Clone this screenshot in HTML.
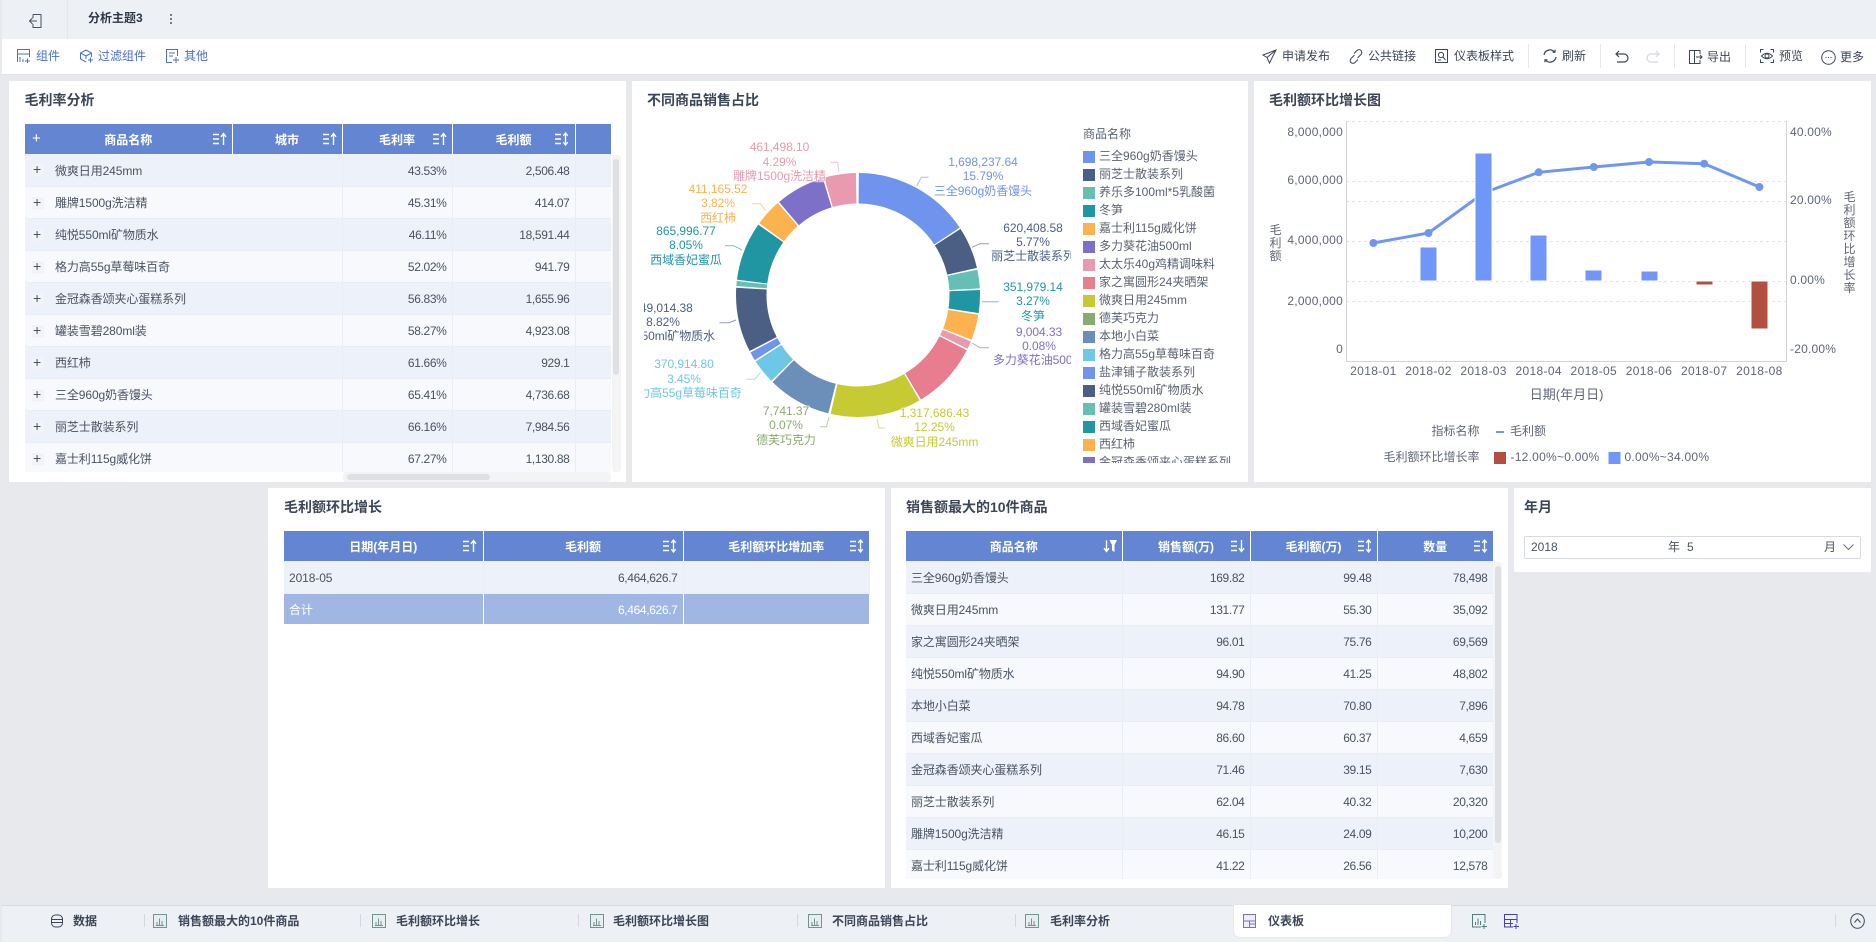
<!DOCTYPE html>
<html lang="zh-CN"><head><meta charset="utf-8"><title>分析主题3</title>
<style>
html,body{margin:0;padding:0}
body{width:1876px;height:942px;position:relative;overflow:hidden;background:#e8e9ed;font:12px/16px "Liberation Sans","Noto Sans CJK SC",sans-serif;color:#4a5262}
.a{position:absolute}
.t{position:absolute;white-space:nowrap;line-height:16px}
.top{left:2px;top:0;width:1874px;height:39px;background:#edf0f5}
.bar{left:2px;top:39px;width:1874px;height:35px;background:#fff;border-bottom:1px solid #e0e2e8;box-sizing:content-box}
.blue{color:#4a6fd1}
.dk{color:#3d4656}
.panel{position:absolute;background:#fff}
.title{position:absolute;font-size:14px;font-weight:bold;line-height:18px;color:#3d4656;white-space:nowrap}
.sep{position:absolute;width:1px;background:#e4e6ec}
table{border-collapse:collapse;table-layout:fixed;font-size:12px;color:#4a5262}
th{height:30px;padding:1px 0 0;background:#6486d2;color:#fff;font-weight:bold;border-right:1px solid #fff;position:relative;text-align:center;box-sizing:border-box}
th:last-child{border-right:0}
td{height:32px;padding:2px 5px 0;box-sizing:border-box;border-right:1px solid #e8edf6;border-bottom:1px solid #e8edf6;white-space:nowrap;letter-spacing:-.1px}
td.r{text-align:right;letter-spacing:-.35px}
tr.o td{background:#edf2fa}
tr.e td{background:#f7f9fd}
th svg{position:absolute;top:8px;width:14px;height:14px}
.pl{position:absolute;left:7px;top:10px;width:12px;height:12px;background:#f1f3f7}
td.n{position:relative;padding-left:30px}
.st{position:absolute;top:905px;height:37px}
.tab{position:absolute;top:913px;font-weight:bold;color:#3d4656;white-space:nowrap;line-height:16px}
svg text{font-family:"Liberation Sans","Noto Sans CJK SC",sans-serif}
</style></head>
<body>
<svg width="0" height="0" style="position:absolute">
<defs>
<symbol id="su" viewBox="0 0 14 14"><path d="M0 2.5H6M0 7H6M0 11.5H6" stroke="#fff" stroke-width="1.4" fill="none"/><path d="M10.5 13V1.5M8 4.8 10.5 1.5 13 4.8" stroke="#fff" stroke-width="1.4" fill="none"/></symbol>
<symbol id="sb" viewBox="0 0 14 14"><path d="M0 2.5H6M0 7H6M0 11.5H6" stroke="#fff" stroke-width="1.4" fill="none"/><path d="M10.5 1V13M8.3 3.8 10.5 1 12.7 3.8M8.3 10.2 10.5 13 12.7 10.2" stroke="#fff" stroke-width="1.3" fill="none"/></symbol>
<symbol id="sd" viewBox="0 0 14 14"><path d="M0 2.5H6M0 7H6M0 11.5H6" stroke="#fff" stroke-width="1.4" fill="none"/><path d="M10.5 1V12.5M8 9.2 10.5 12.5 13 9.2" stroke="#fff" stroke-width="1.4" fill="none"/></symbol>
<symbol id="sf" viewBox="0 0 14 14"><path d="M3.5 1.5V12.5M1 9.2 3.5 12.5 6 9.2" stroke="#fff" stroke-width="1.4" fill="none"/><path d="M6.5 1H14L11.5 6V13L9 11.5V6Z" fill="#fff"/></symbol>
<symbol id="ch" viewBox="0 0 14 14"><rect x=".5" y=".5" width="13" height="13" fill="#e6eef0" stroke="#6f968f"/><path d="M4 11V8M6.5 11V4.5M9 11V7M3 11.5H11" stroke="#6f968f" fill="none"/></symbol>
</defs>
</svg>

<div class="a top"></div>
<div class="sep" style="left:67px;top:0;height:39px;background:#e4e7ee"></div>
<svg class="a" style="left:28px;top:13px" width="15" height="16" viewBox="0 0 15 16" fill="none" stroke="#4a5262"><path d="M5 1.5H13V14.5H5V11M5 5V1.5"/><path d="M9 8H1.5M4.5 5 1.5 8 4.5 11"/></svg>
<div class="t" style="left:88px;top:10px;font-weight:bold;color:#2f3644">分析主题3</div>
<svg class="a" style="left:169px;top:12px" width="4" height="14"><circle cx="2" cy="3" r="1" fill="#555"/><circle cx="2" cy="7" r="1" fill="#555"/><circle cx="2" cy="11" r="1" fill="#555"/></svg>

<div class="a bar"></div>
<svg class="a" style="left:17px;top:49px" width="13" height="14" viewBox="0 0 13 14" fill="none" stroke="#4a6fd1"><path d="M.5 13V.5H12.5V8M.5 5H12.5M3 13V8M6 13V10M8 12H13M10.5 9.5V14"/></svg>
<div class="t blue" style="left:36px;top:48px">组件</div>
<svg class="a" style="left:79px;top:49px" width="14" height="14" viewBox="0 0 14 14" fill="none" stroke="#4a6fd1"><path d="M7 1 12.5 4V8M7 1 1.5 4V10L7 13M1.5 4 7 7 12.5 4M7 7V10M9 11H14M11.5 8.5V13.5"/></svg>
<div class="t blue" style="left:98px;top:48px">过滤组件</div>
<svg class="a" style="left:166px;top:49px" width="13" height="14" viewBox="0 0 13 14" fill="none" stroke="#4a6fd1"><path d="M.5 13.5V.5H11.5V7M3 4H9M3 7H7M.5 13.5H6M7 11H13M10 8V14"/></svg>
<div class="t blue" style="left:184px;top:48px">其他</div>

<svg class="a" style="left:1262px;top:49px" width="15" height="15" viewBox="0 0 15 15" fill="none" stroke="#3d4656"><path d="M14 1 1 6 5 8.5 7.5 14ZM14 1 5 8.5"/></svg>
<div class="t dk" style="left:1282px;top:48px">申请发布</div>
<svg class="a" style="left:1349px;top:49px" width="14" height="15" viewBox="0 0 14 15" fill="none" stroke="#3d4656"><path d="M5.5 6 2 9.5A2.8 2.8 0 0 0 6 13.5L9 10.5M8.5 9 12 5.5A2.8 2.8 0 0 0 8 1.5L5 4.5"/></svg>
<div class="t dk" style="left:1368px;top:48px">公共链接</div>
<svg class="a" style="left:1435px;top:49px" width="13" height="14" viewBox="0 0 13 14" fill="none" stroke="#3d4656"><path d="M.5.5H12.5V13.5H.5Z"/><circle cx="6" cy="6" r="2.6"/><path d="M8 8 10.5 11M3 11H6"/></svg>
<div class="t dk" style="left:1454px;top:48px">仪表板样式</div>
<div class="sep" style="left:1528px;top:44px;height:24px"></div>
<svg class="a" style="left:1543px;top:49px" width="14" height="14" viewBox="0 0 14 14" fill="none" stroke="#3d4656" stroke-width="1.2"><path d="M1 6A6 6 0 0 1 11.5 3M13 8A6 6 0 0 1 2.5 11M9.5 3.2H12V.8M4.5 10.8H2V13.2"/></svg>
<div class="t dk" style="left:1562px;top:48px">刷新</div>
<div class="sep" style="left:1600px;top:44px;height:24px"></div>
<svg class="a" style="left:1615px;top:50px" width="14" height="13" viewBox="0 0 14 13" fill="none" stroke="#3d4656" stroke-width="1.2"><path d="M4 1 1 4 4 7M1 4H9A3.5 3.5 0 0 1 9 12H2"/></svg>
<svg class="a" style="left:1646px;top:50px" width="14" height="13" viewBox="0 0 14 13" fill="none" stroke="#d5d8de" stroke-width="1.2"><path d="M10 1 13 4 10 7M13 4H5A3.5 3.5 0 0 0 5 12H12"/></svg>
<div class="sep" style="left:1674px;top:44px;height:24px"></div>
<svg class="a" style="left:1689px;top:50px" width="14" height="14" viewBox="0 0 14 14" fill="none" stroke="#3d4656"><path d="M.5.5H5.5V13.5H.5ZM5.5.5H11V4M5.5 13.5H11V10M7 7H13M11 5 13 7 11 9"/></svg>
<div class="t dk" style="left:1707px;top:49px">导出</div>
<div class="sep" style="left:1745px;top:44px;height:24px"></div>
<svg class="a" style="left:1760px;top:49px" width="14" height="14" viewBox="0 0 14 14" fill="none" stroke="#3d4656"><path d="M.5 3.5V.5H3.5M10.5.5H13.5V3.5M13.5 10.5V13.5H10.5M3.5 13.5H.5V10.5M1.5 7Q7 1.5 12.5 7 7 12.5 1.5 7Z"/><circle cx="7" cy="7" r="2"/></svg>
<div class="t dk" style="left:1779px;top:48px">预览</div>
<svg class="a" style="left:1821px;top:50px" width="15" height="15" viewBox="0 0 15 15" fill="none" stroke="#3d4656"><circle cx="7.5" cy="7.5" r="6.8"/><path d="M4.5 7.5h1M7 7.5h1M9.5 7.5h1"/></svg>
<div class="t dk" style="left:1840px;top:49px">更多</div>

<!-- Panel 1 -->
<div class="panel" style="left:9px;top:81px;width:617px;height:401px"></div>
<div class="title" style="left:24.5px;top:91px">毛利率分析</div>
<div class="a" style="left:25px;top:124px;width:586px;height:348px;overflow:hidden">
<table style="width:586px">
<colgroup><col style="width:207px"><col style="width:110px"><col style="width:110px"><col style="width:123px"><col style="width:36px"></colgroup>
<tr><th><span class="a" style="left:7px;top:7px;font-size:15px;font-weight:normal">+</span>商品名称<svg style="right:5px"><use href="#su"/></svg></th><th>城市<svg style="right:5px"><use href="#su"/></svg></th><th>毛利率<svg style="right:5px"><use href="#su"/></svg></th><th>毛利额<svg style="right:6px"><use href="#sb"/></svg></th><th></th></tr>
<tr class="o"><td class="n" colspan="2"><span class="pl"></span><span class="a" style="left:8px;top:7px;font-size:14px">+</span>微爽日用245mm</td><td class="r">43.53%</td><td class="r">2,506.48</td><td></td></tr>
<tr class="e"><td class="n" colspan="2"><span class="pl"></span><span class="a" style="left:8px;top:7px;font-size:14px">+</span>雕牌1500g洗洁精</td><td class="r">45.31%</td><td class="r">414.07</td><td></td></tr>
<tr class="o"><td class="n" colspan="2"><span class="pl"></span><span class="a" style="left:8px;top:7px;font-size:14px">+</span>纯悦550ml矿物质水</td><td class="r">46.11%</td><td class="r">18,591.44</td><td></td></tr>
<tr class="e"><td class="n" colspan="2"><span class="pl"></span><span class="a" style="left:8px;top:7px;font-size:14px">+</span>格力高55g草莓味百奇</td><td class="r">52.02%</td><td class="r">941.79</td><td></td></tr>
<tr class="o"><td class="n" colspan="2"><span class="pl"></span><span class="a" style="left:8px;top:7px;font-size:14px">+</span>金冠森香颂夹心蛋糕系列</td><td class="r">56.83%</td><td class="r">1,655.96</td><td></td></tr>
<tr class="e"><td class="n" colspan="2"><span class="pl"></span><span class="a" style="left:8px;top:7px;font-size:14px">+</span>罐装雪碧280ml装</td><td class="r">58.27%</td><td class="r">4,923.08</td><td></td></tr>
<tr class="o"><td class="n" colspan="2"><span class="pl"></span><span class="a" style="left:8px;top:7px;font-size:14px">+</span>西红柿</td><td class="r">61.66%</td><td class="r">929.1</td><td></td></tr>
<tr class="e"><td class="n" colspan="2"><span class="pl"></span><span class="a" style="left:8px;top:7px;font-size:14px">+</span>三全960g奶香馒头</td><td class="r">65.41%</td><td class="r">4,736.68</td><td></td></tr>
<tr class="o"><td class="n" colspan="2"><span class="pl"></span><span class="a" style="left:8px;top:7px;font-size:14px">+</span>丽芝士散装系列</td><td class="r">66.16%</td><td class="r">7,984.56</td><td></td></tr>
<tr class="e"><td class="n" colspan="2"><span class="pl"></span><span class="a" style="left:8px;top:7px;font-size:14px">+</span>嘉士利115g威化饼</td><td class="r">67.27%</td><td class="r">1,130.88</td><td></td></tr>
</table></div>
<div class="a" style="left:612px;top:155px;width:9px;height:317px;background:#f4f4f5;border-radius:3px"></div>
<div class="a" style="left:613px;top:159px;width:6px;height:216px;background:#dfe0e4;border-radius:3px"></div>
<div class="a" style="left:343px;top:472px;width:268px;height:10px;background:#f4f4f5;border-radius:3px"></div>
<div class="a" style="left:347px;top:474px;width:143px;height:6px;background:#dfe0e4;border-radius:3px"></div>

<!-- Panel 2 -->
<div class="panel" style="left:632px;top:81px;width:616px;height:401px"></div>
<div class="title" style="left:647px;top:91px">不同商品销售占比</div>
<svg class="a" style="left:0;top:0" width="1876" height="942" font-size="12">
<defs><clipPath id="pc"><rect x="644" y="120" width="427" height="340"/></clipPath><clipPath id="lc"><rect x="1080" y="120" width="165" height="343"/></clipPath></defs>
<g fill="none" stroke-width="30.5" transform="rotate(-90 858 295)">
<circle cx="858" cy="295" r="106.75" pathLength="360" stroke="#6f94ee" stroke-dasharray="56.1 360" stroke-dashoffset="-.4"/>
<circle cx="858" cy="295" r="106.75" pathLength="360" stroke="#4b5f85" stroke-dasharray="20 360" stroke-dashoffset="-57.2"/>
<circle cx="858" cy="295" r="106.75" pathLength="360" stroke="#65bfb5" stroke-dasharray="8.9 360" stroke-dashoffset="-78"/>
<circle cx="858" cy="295" r="106.75" pathLength="360" stroke="#2196a3" stroke-dasharray="10.9 360" stroke-dashoffset="-87.7"/>
<circle cx="858" cy="295" r="106.75" pathLength="360" stroke="#fbb24f" stroke-dasharray="12.2 360" stroke-dashoffset="-99.4"/>
<circle cx="858" cy="295" r="106.75" pathLength="360" stroke="#e99aae" stroke-dasharray="3.8 360" stroke-dashoffset="-112.4"/>
<circle cx="858" cy="295" r="106.75" pathLength="360" stroke="#e77d8e" stroke-dasharray="32 360" stroke-dashoffset="-117"/>
<circle cx="858" cy="295" r="106.75" pathLength="360" stroke="#c6cb33" stroke-dasharray="43.3 360" stroke-dashoffset="-149.8"/>
<circle cx="858" cy="295" r="106.75" pathLength="360" stroke="#6b8fb8" stroke-dasharray="30.4 360" stroke-dashoffset="-194.2"/>
<circle cx="858" cy="295" r="106.75" pathLength="360" stroke="#6ec7e6" stroke-dasharray="11.7 360" stroke-dashoffset="-225.4"/>
<circle cx="858" cy="295" r="106.75" pathLength="360" stroke="#6f94ee" stroke-dasharray="4.1 360" stroke-dashoffset="-237.9"/>
<circle cx="858" cy="295" r="106.75" pathLength="360" stroke="#4b5f85" stroke-dasharray="30.8 360" stroke-dashoffset="-242.8"/>
<circle cx="858" cy="295" r="106.75" pathLength="360" stroke="#65bfb5" stroke-dasharray="2.4 360" stroke-dashoffset="-274.4"/>
<circle cx="858" cy="295" r="106.75" pathLength="360" stroke="#2196a3" stroke-dasharray="28 360" stroke-dashoffset="-277.4"/>
<circle cx="858" cy="295" r="106.75" pathLength="360" stroke="#fbb24f" stroke-dasharray="12.9 360" stroke-dashoffset="-306.2"/>
<circle cx="858" cy="295" r="106.75" pathLength="360" stroke="#7d70c8" stroke-dasharray="23.5 360" stroke-dashoffset="-319.9"/>
<circle cx="858" cy="295" r="106.75" pathLength="360" stroke="#e99aae" stroke-dasharray="15 360" stroke-dashoffset="-344.2"/>
</g>
<g fill="none" stroke-width="1" opacity=".6">
<path d="M916.7 186 921.4 177.3H928.5" stroke="#6f94ee"/>
<path d="M972 247.3 980 243.7H989" stroke="#4b5f85"/>
<path d="M982 301.7H998.5" stroke="#2196a3"/>
<path d="M972 343 980 347.7H989" stroke="#7d70c8"/>
<path d="M877 419 879 428H885" stroke="#c6cb33"/>
<path d="M829 417 826.5 426.7H820" stroke="#8aab6f"/>
<path d="M760.5 373 754.5 379.3H746.6" stroke="#6ec7e6"/>
<path d="M736 320 729 322.7H719.4" stroke="#4b5f85"/>
<path d="M742 250 733.6 245.7H725" stroke="#2196a3"/>
<path d="M765.6 210.7 760.5 203.7H751.8" stroke="#fbb24f"/>
<path d="M838.8 171.7 837.6 162.3H830.5" stroke="#e99aae"/>
</g>
<g clip-path="url(#pc)" text-anchor="middle" stroke="#fff" stroke-width="2" stroke-opacity=".7" paint-order="stroke" letter-spacing="-.05">
<g fill="#6f94ee"><text x="983" y="166">1,698,237.64</text><text x="983" y="180">15.79%</text><text x="983" y="195">三全960g奶香馒头</text></g>
<g fill="#4b5f85"><text x="1033" y="232">620,408.58</text><text x="1033" y="246">5.77%</text><text x="1033" y="260">丽芝士散装系列</text></g>
<g fill="#2196a3"><text x="1033" y="291">351,979.14</text><text x="1033" y="305">3.27%</text><text x="1033" y="320">冬笋</text></g>
<g fill="#7d70c8"><text x="1039" y="336">9,004.33</text><text x="1039" y="350">0.08%</text><text x="1039" y="364">多力葵花油500ml</text></g>
<g fill="#c6cb33"><text x="934.5" y="417">1,317,686.43</text><text x="934.5" y="431">12.25%</text><text x="934.5" y="446">微爽日用245mm</text></g>
<g fill="#8aab6f"><text x="786" y="415">7,741.37</text><text x="786" y="429">0.07%</text><text x="786" y="444">德芙巧克力</text></g>
<g fill="#6ec7e6"><text x="684" y="368">370,914.80</text><text x="684" y="383">3.45%</text><text x="684" y="397">格力高55g草莓味百奇</text></g>
<g fill="#4b5f85"><text x="663" y="312">949,014.38</text><text x="663" y="326">8.82%</text><text x="663" y="340">纯悦550ml矿物质水</text></g>
<g fill="#2196a3"><text x="686" y="235">865,996.77</text><text x="686" y="249">8.05%</text><text x="686" y="264">西域香妃蜜瓜</text></g>
<g fill="#fbb24f"><text x="718" y="193">411,165.52</text><text x="718" y="207">3.82%</text><text x="718" y="222">西红柿</text></g>
<g fill="#e99aae"><text x="779.5" y="151">461,498.10</text><text x="779.5" y="166">4.29%</text><text x="779.5" y="180">雕牌1500g洗洁精</text></g>
</g>
<text x="1083" y="138" fill="#5a6272">商品名称</text>
<g clip-path="url(#lc)" fill="#5a6272">
<rect x="1083" y="151" width="12" height="12" fill="#6f94ee"/><text x="1099" y="160">三全960g奶香馒头</text>
<rect x="1083" y="169" width="12" height="12" fill="#4b5f85"/><text x="1099" y="178">丽芝士散装系列</text>
<rect x="1083" y="187" width="12" height="12" fill="#65bfb5"/><text x="1099" y="196">养乐多100ml*5乳酸菌</text>
<rect x="1083" y="205" width="12" height="12" fill="#2196a3"/><text x="1099" y="214">冬笋</text>
<rect x="1083" y="223" width="12" height="12" fill="#fbb24f"/><text x="1099" y="232">嘉士利115g威化饼</text>
<rect x="1083" y="241" width="12" height="12" fill="#7d70c8"/><text x="1099" y="250">多力葵花油500ml</text>
<rect x="1083" y="259" width="12" height="12" fill="#e99aae"/><text x="1099" y="268">太太乐40g鸡精调味料</text>
<rect x="1083" y="277" width="12" height="12" fill="#e77d8e"/><text x="1099" y="286">家之寓圆形24夹晒架</text>
<rect x="1083" y="295" width="12" height="12" fill="#c6cb33"/><text x="1099" y="304">微爽日用245mm</text>
<rect x="1083" y="313" width="12" height="12" fill="#8aab6f"/><text x="1099" y="322">德芙巧克力</text>
<rect x="1083" y="331" width="12" height="12" fill="#6b8fb8"/><text x="1099" y="340">本地小白菜</text>
<rect x="1083" y="349" width="12" height="12" fill="#6ec7e6"/><text x="1099" y="358">格力高55g草莓味百奇</text>
<rect x="1083" y="367" width="12" height="12" fill="#6f94ee"/><text x="1099" y="376">盐津铺子散装系列</text>
<rect x="1083" y="385" width="12" height="12" fill="#4b5f85"/><text x="1099" y="394">纯悦550ml矿物质水</text>
<rect x="1083" y="403" width="12" height="12" fill="#65bfb5"/><text x="1099" y="412">罐装雪碧280ml装</text>
<rect x="1083" y="421" width="12" height="12" fill="#2196a3"/><text x="1099" y="430">西域香妃蜜瓜</text>
<rect x="1083" y="439" width="12" height="12" fill="#fbb24f"/><text x="1099" y="448">西红柿</text>
<rect x="1083" y="457" width="12" height="12" fill="#7d70c8"/><text x="1099" y="466">金冠森香颂夹心蛋糕系列</text>
</g>
</svg>

<!-- Panel 3 -->
<div class="panel" style="left:1254px;top:81px;width:617px;height:401px"></div>
<div class="title" style="left:1269px;top:91px">毛利额环比增长图</div>
<svg class="a" style="left:0;top:0" width="1876" height="942" font-size="12" fill="#5f6675">
<g stroke="#e4e4e4" stroke-dasharray="3 3"><path d="M1346 121.5H1786M1346 181.5H1786M1346 201.5H1786M1346 241.5H1786M1346 281.5H1786M1346 301.5H1786"/></g>
<path d="M1346.5 121V361.5H1786.5V121" fill="none" stroke="#d4d4d4"/>
<g text-anchor="end" letter-spacing=".25"><text x="1343" y="136">8,000,000</text><text x="1343" y="184">6,000,000</text><text x="1343" y="244">4,000,000</text><text x="1343" y="305">2,000,000</text><text x="1343" y="353">0</text></g>
<g letter-spacing=".2"><text x="1790" y="136">40.00%</text><text x="1790" y="204">20.00%</text><text x="1790" y="284">0.00%</text><text x="1790" y="353">-20.00%</text></g>
<g text-anchor="middle">
<text x="1275.5" y="234">毛</text><text x="1275.5" y="247">利</text><text x="1275.5" y="260">额</text>
<text x="1849.5" y="201">毛</text><text x="1849.5" y="214">利</text><text x="1849.5" y="227">额</text><text x="1849.5" y="240">环</text><text x="1849.5" y="253">比</text><text x="1849.5" y="266">增</text><text x="1849.5" y="279">长</text><text x="1849.5" y="292">率</text>
<g letter-spacing=".35"><text x="1373.4" y="375">2018-01</text><text x="1428.5" y="375">2018-02</text><text x="1483.6" y="375">2018-03</text><text x="1538.7" y="375">2018-04</text><text x="1593.8" y="375">2018-05</text><text x="1649" y="375">2018-06</text><text x="1704.2" y="375">2018-07</text><text x="1759.4" y="375">2018-08</text></g>
<text x="1566.6" y="399" font-size="13">日期(年月日)</text>
</g>
<path d="M1373.4 243 1428.5 233 1483.6 193 1538.7 172.3 1593.8 167 1649 162 1704.2 163.7 1759.4 187" fill="none" stroke="#7097f0" stroke-width="3"/>
<g fill="#7097f0"><circle cx="1373.4" cy="243" r="4"/><circle cx="1428.5" cy="233" r="4"/><circle cx="1538.7" cy="172.3" r="4"/><circle cx="1593.8" cy="167" r="4"/><circle cx="1649" cy="162" r="4"/><circle cx="1704.2" cy="163.7" r="4"/><circle cx="1759.4" cy="187" r="4"/></g>
<g fill="#7097f8" stroke="#fff"><rect x="1420" y="247" width="17" height="34"/><rect x="1475" y="153" width="17" height="128"/><rect x="1530" y="235" width="17" height="46"/><rect x="1585" y="270" width="17" height="11"/><rect x="1641" y="271" width="17" height="10"/></g>
<g fill="#b2503f" stroke="#fff"><rect x="1696" y="281" width="17" height="4"/><rect x="1751" y="281" width="17" height="48"/></g>
<g text-anchor="end"><text x="1479.5" y="435">指标名称</text><text x="1479.5" y="461">毛利额环比增长率</text></g>
<path d="M1496 432H1504" stroke="#7097f0" stroke-width="2"/>
<text x="1510" y="435">毛利额</text>
<rect x="1494" y="452" width="12" height="12" fill="#b2503f"/><text x="1510.5" y="461" letter-spacing=".25">-12.00%~0.00%</text>
<rect x="1608.5" y="452" width="12" height="12" fill="#7097f8"/><text x="1624.5" y="461" letter-spacing=".25">0.00%~34.00%</text>
</svg>

<!-- Bottom panels -->
<div class="panel" style="left:268px;top:488px;width:617px;height:400px"></div>
<div class="title" style="left:284px;top:498px">毛利额环比增长</div>
<div class="a" style="left:284px;top:531px">
<table style="width:585px">
<colgroup><col style="width:199px"><col style="width:200px"><col style="width:186px"></colgroup>
<tr><th>日期(年月日)<svg style="right:6px"><use href="#su"/></svg></th><th>毛利额<svg style="right:6px"><use href="#sb"/></svg></th><th>毛利额环比增加率<svg style="right:5px"><use href="#sb"/></svg></th></tr>
<tr class="o"><td>2018-05</td><td class="r">6,464,626.7</td><td></td></tr>
<tr><td style="background:#a0b6e3;color:#fff;border-right:1px solid #fff;border-bottom:0;height:31px">合计</td><td class="r" style="background:#a0b6e3;color:#fff;border-right:1px solid #fff;border-bottom:0;height:31px">6,464,626.7</td><td style="background:#a0b6e3;border:0;height:31px"></td></tr>
</table></div>

<div class="panel" style="left:891px;top:488px;width:617px;height:400px"></div>
<div class="title" style="left:906px;top:498px">销售额最大的10件商品</div>
<div class="a" style="left:906px;top:531px;width:587px;height:348px;overflow:hidden">
<table style="width:587px">
<colgroup><col style="width:216px"><col style="width:128px"><col style="width:127px"><col style="width:116px"></colgroup>
<tr><th>商品名称<svg style="right:5px"><use href="#sf"/></svg></th><th>销售额(万)<svg style="right:5px"><use href="#sd"/></svg></th><th>毛利额(万)<svg style="right:5px"><use href="#sb"/></svg></th><th>数量<svg style="right:5px"><use href="#sb"/></svg></th></tr>
<tr class="o"><td>三全960g奶香馒头</td><td class="r">169.82</td><td class="r">99.48</td><td class="r">78,498</td></tr>
<tr class="e"><td>微爽日用245mm</td><td class="r">131.77</td><td class="r">55.30</td><td class="r">35,092</td></tr>
<tr class="o"><td>家之寓圆形24夹晒架</td><td class="r">96.01</td><td class="r">75.76</td><td class="r">69,569</td></tr>
<tr class="e"><td>纯悦550ml矿物质水</td><td class="r">94.90</td><td class="r">41.25</td><td class="r">48,802</td></tr>
<tr class="o"><td>本地小白菜</td><td class="r">94.78</td><td class="r">70.80</td><td class="r">7,896</td></tr>
<tr class="e"><td>西域香妃蜜瓜</td><td class="r">86.60</td><td class="r">60.37</td><td class="r">4,659</td></tr>
<tr class="o"><td>金冠森香颂夹心蛋糕系列</td><td class="r">71.46</td><td class="r">39.15</td><td class="r">7,630</td></tr>
<tr class="e"><td>丽芝士散装系列</td><td class="r">62.04</td><td class="r">40.32</td><td class="r">20,320</td></tr>
<tr class="o"><td>雕牌1500g洗洁精</td><td class="r">46.15</td><td class="r">24.09</td><td class="r">10,200</td></tr>
<tr class="e"><td>嘉士利115g威化饼</td><td class="r">41.22</td><td class="r">26.56</td><td class="r">12,578</td></tr>
</table></div>
<div class="a" style="left:1493px;top:562px;width:9px;height:317px;background:#f4f4f5;border-radius:3px"></div>
<div class="a" style="left:1495px;top:566px;width:6px;height:277px;background:#dfe0e4;border-radius:3px"></div>

<div class="panel" style="left:1514px;top:488px;width:357px;height:84px"></div>
<div class="title" style="left:1524px;top:498px">年月</div>
<div class="a" style="left:1524px;top:536px;width:337px;height:23px;box-sizing:border-box;border:1px solid #d8dae2;border-radius:2px"></div>
<div class="t" style="left:1531px;top:539px;color:#4a5262">2018</div>
<div class="t" style="left:1668px;top:539px;color:#4a5262">年</div>
<div class="t" style="left:1687px;top:539px;color:#4a5262">5</div>
<div class="t" style="left:1824px;top:539px;color:#4a5262">月</div>
<svg class="a" style="left:1843px;top:544px" width="11" height="7" fill="none" stroke="#6b7280"><path d="M.5.5 5.5 5.5 10.5.5"/></svg>

<!-- Status bar -->
<div class="a" style="left:2px;top:905px;width:1874px;height:37px;background:#edf0f5;border-top:1px solid #d8dae2;box-sizing:border-box"></div>
<div class="a" style="left:1234px;top:905px;width:217px;height:32px;background:#fff;border-radius:0 0 6px 6px;box-shadow:0 0 1px #b8bcc6"></div>
<svg class="a" style="left:51px;top:914px" width="12" height="14" viewBox="0 0 12 14" fill="none" stroke="#3d4656"><rect x=".5" y="1" width="11" height="12" rx="4"/><path d="M.5 5.5H11.5M.5 8.5H11.5"/></svg>
<div class="tab" style="left:73px">数据</div>
<div class="sep" style="left:144px;top:914px;height:13px;background:#d5d8de"></div>
<svg class="a" style="left:153px;top:914px" width="14" height="14"><use href="#ch"/></svg>
<div class="tab" style="left:178px">销售额最大的10件商品</div>
<div class="sep" style="left:360px;top:914px;height:13px;background:#d5d8de"></div>
<svg class="a" style="left:372px;top:914px" width="14" height="14"><use href="#ch"/></svg>
<div class="tab" style="left:396px">毛利额环比增长</div>
<div class="sep" style="left:578px;top:914px;height:13px;background:#d5d8de"></div>
<svg class="a" style="left:590px;top:914px" width="14" height="14"><use href="#ch"/></svg>
<div class="tab" style="left:613px">毛利额环比增长图</div>
<div class="sep" style="left:797px;top:914px;height:13px;background:#d5d8de"></div>
<svg class="a" style="left:808px;top:914px" width="14" height="14"><use href="#ch"/></svg>
<div class="tab" style="left:832px">不同商品销售占比</div>
<div class="sep" style="left:1015px;top:914px;height:13px;background:#d5d8de"></div>
<svg class="a" style="left:1025px;top:914px" width="14" height="14"><use href="#ch"/></svg>
<div class="tab" style="left:1050px">毛利率分析</div>
<svg class="a" style="left:1243px;top:914px" width="13" height="14" viewBox="0 0 13 14"><rect x=".5" y=".5" width="12" height="13" fill="#efedf9" stroke="#7d70c8"/><path d="M.5 7H12.5M6.5 7V13.5M6.5 10H12.5" stroke="#7d70c8" fill="none"/></svg>
<div class="tab" style="left:1268px">仪表板</div>
<svg class="a" style="left:1472px;top:914px" width="15" height="15" viewBox="0 0 15 15" fill="none" stroke="#4f7f76"><path d="M13 9V.5H.5V13H9M3.5 11V8M6 11V4.5M8.5 11V7M12 10V15M9.5 12.5H15"/></svg>
<svg class="a" style="left:1504px;top:914px" width="16" height="15" viewBox="0 0 16 15" fill="none" stroke="#4a3fa8"><path d="M13 9V.5H.5V13H9M.5 5.5H13M.5 9.5H9M6.5 5.5V13M12 10V15M9.5 12.5H15"/></svg>
<div class="sep" style="left:1835px;top:914px;height:13px;background:#d5d8de"></div>
<svg class="a" style="left:1850px;top:913px" width="15" height="16" viewBox="0 0 15 16" fill="none" stroke="#3d4656"><ellipse cx="7.5" cy="8" rx="6.8" ry="7.3"/><path d="M4.5 9.5 7.5 6 10.5 9.5"/></svg>
</body></html>
